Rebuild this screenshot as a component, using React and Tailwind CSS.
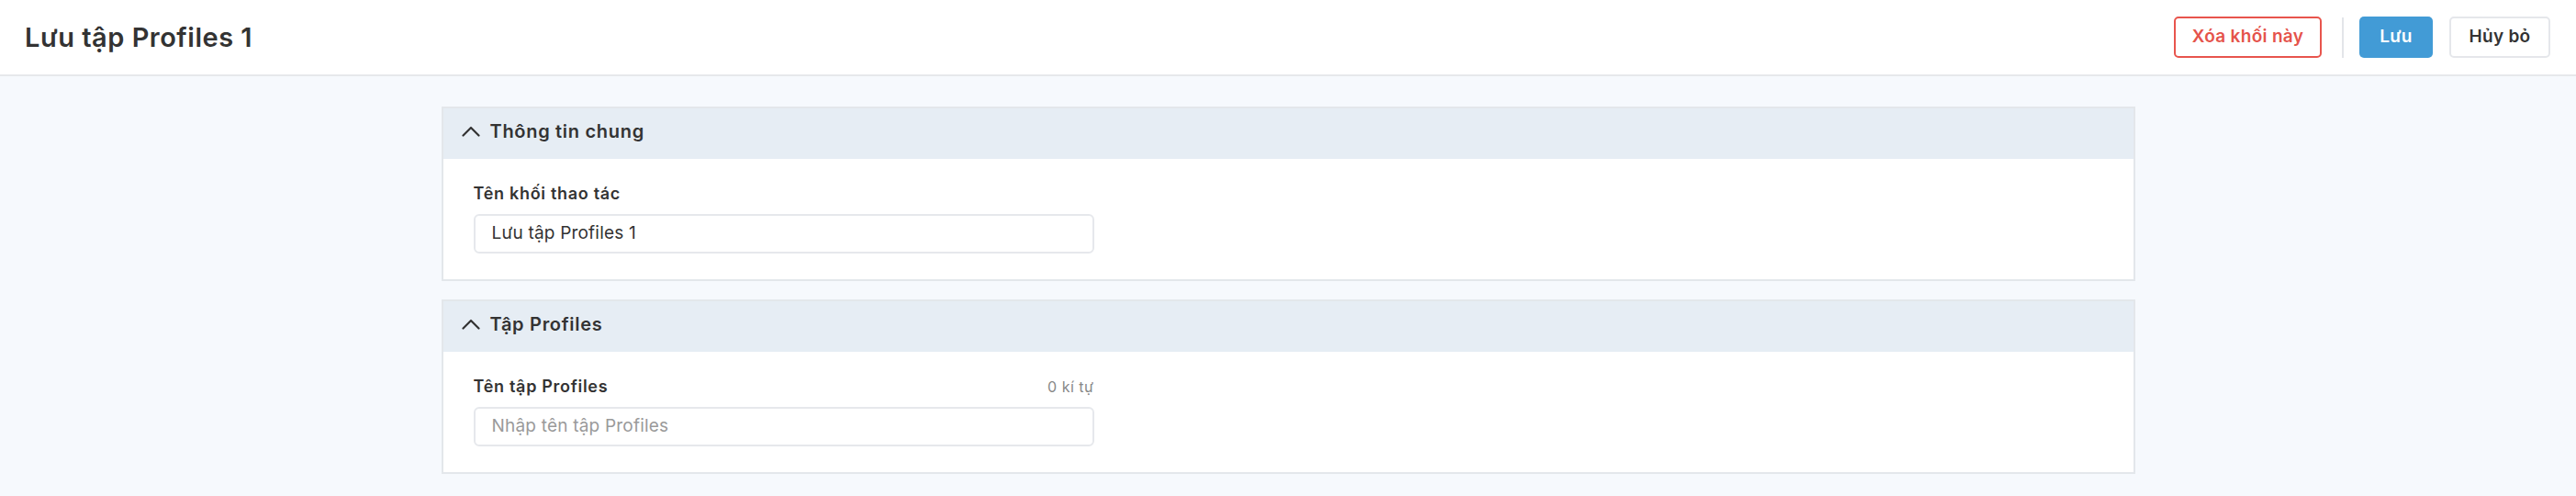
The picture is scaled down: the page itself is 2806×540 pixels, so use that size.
import React from "react";

function Chevron() {
  return (
    <svg width="20" height="12" viewBox="0 0 20 12" fill="none" className="shrink-0">
      <path d="M1.5 10.5 L10 2 L18.5 10.5" stroke="#333" strokeWidth="2.2" strokeLinecap="round" strokeLinejoin="round" />
    </svg>
  );
}

function Card({ title, children }) {
  return (
    <div className="border-2 border-[#e3e7eb] bg-white">
      <div className="h-[55px] bg-[#e6edf4] flex items-center pl-[20px] pb-[5px] gap-[11px]">
        <Chevron />
        <span className="text-[20px] font-semibold text-[#333] tracking-[0.7px]">{title}</span>
      </div>
      <div className="px-[33px] pt-[26px] pb-[28px]">{children}</div>
    </div>
  );
}

export default function App() {
  return (
    <div className="min-h-[540px] bg-[#f6f9fd] font-['Inter','Noto_Sans',sans-serif] text-[#333]">
      <header className="h-[83px] bg-white border-b-2 border-[#e6e8eb] flex items-center justify-between pl-[27px] pr-[28px]">
        <h1 className="text-[29px] font-semibold text-[#333] tracking-[0.5px]">Lưu tập Profiles 1</h1>
        <div className="flex items-center">
          <button className="h-[45px] w-[161px] rounded-[5px] border-2 border-[#e8554d] text-[#e5534b] text-[19px] font-semibold bg-white tracking-[0.3px]">
            Xóa khối này
          </button>
          <div className="w-[2px] h-[44px] bg-[#e3e5e9] ml-[22px] mr-[17px]" />
          <button className="h-[45px] w-[80px] rounded-[5px] bg-[#429bd6] text-white text-[19px] font-semibold tracking-[0.3px]">
            Lưu
          </button>
          <button className="h-[45px] w-[110px] ml-[18px] rounded-[5px] border-2 border-[#e5e7eb] bg-white text-[#333] text-[19px] font-semibold tracking-[0.3px]">
            Hủy bỏ
          </button>
        </div>
      </header>
      <main className="w-[1845px] mx-auto pt-[33px] flex flex-col gap-[20px]">
        <Card title="Thông tin chung">
          <div className="w-[676px]">
            <div className="text-[18px] font-semibold text-[#333] leading-[24px] tracking-[0.7px]">Tên khối thao tác</div>
            <div className="mt-[10px] h-[43px] rounded-[6px] border-2 border-[#e6e8ec] flex items-center px-[18px] text-[19px] text-[#333] tracking-[0.2px]">
              Lưu tập Profiles 1
            </div>
          </div>
        </Card>
        <Card title="Tập Profiles">
          <div className="w-[676px]">
            <div className="flex items-end justify-between leading-[24px]">
              <span className="text-[18px] font-semibold text-[#333] tracking-[0.7px]">Tên tập Profiles</span>
              <span className="text-[16px] text-[#888] tracking-[0.5px]">0 kí tự</span>
            </div>
            <div className="mt-[10px] h-[43px] rounded-[6px] border-2 border-[#e6e8ec] flex items-center px-[18px] text-[19px] text-[#9a9a9a] tracking-[0.2px]">
              Nhập tên tập Profiles
            </div>
          </div>
        </Card>
      </main>
    </div>
  );
}
